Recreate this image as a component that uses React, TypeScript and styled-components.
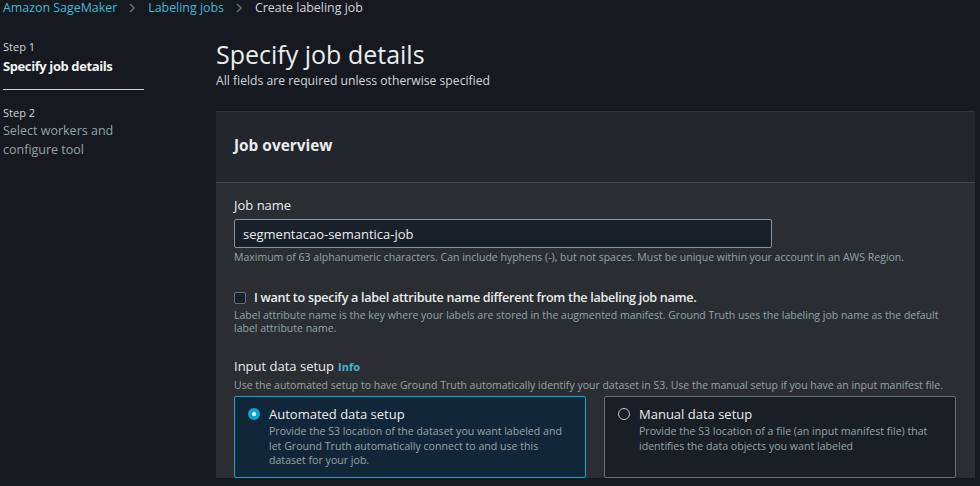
import React from "react";
import styled, { createGlobalStyle } from "styled-components";

const Global = createGlobalStyle`
  html, body { margin: 0; padding: 0; background: #16191f; }
  body { font-family: "Open Sans", "Noto Sans", sans-serif; color: #d1d5db; width: 980px; height: 486px; overflow: hidden; }
  * { box-sizing: border-box; }
`;

const Page = styled.div`
  width: 980px;
  height: 486px;
  overflow: hidden;
  background: #16191f;
`;

const Breadcrumbs = styled.nav`
  display: flex;
  align-items: center;
  gap: 10px;
  height: 16px;
  padding-left: 3px;
  font-size: 12.4px;
  line-height: 16px;
`;

const Crumb = styled.span<{ $link?: boolean }>`
  color: ${(p) => (p.$link ? "#44b9d6" : "#d1d5db")};
  white-space: nowrap;
`;

const Chevron = styled.svg`
  width: 11px;
  height: 12px;
  flex: none;
`;

const Layout = styled.div`
  display: grid;
  grid-template-columns: 216px 1fr;
  padding-top: 23px;
`;

const SideNav = styled.aside`
  padding-left: 3px;
  display: flex;
  flex-direction: column;
`;

const StepBlock = styled.div<{ $active?: boolean }>`
  width: 141px;
  padding-bottom: ${(p) => (p.$active ? "13px" : "0")};
  border-bottom: ${(p) => (p.$active ? "1px solid #d1d5db" : "none")};
  margin-bottom: ${(p) => (p.$active ? "15px" : "0")};
`;

const StepNum = styled.div`
  font-size: 11px;
  line-height: 16px;
  color: #d1d5db;
`;

const StepTitle = styled.div<{ $active?: boolean }>`
  font-size: ${(p) => (p.$active ? "13px" : "12.5px")};
  line-height: 19px;
  margin-top: ${(p) => (p.$active ? "2px" : "0")};
  font-weight: ${(p) => (p.$active ? 700 : 400)};
  letter-spacing: ${(p) => (p.$active ? "-0.4px" : "0")};
  color: ${(p) => (p.$active ? "#f2f3f3" : "#95a5a6")};
`;

const Main = styled.main`
  display: flex;
  flex-direction: column;
  width: 759px;
`;

const Title = styled.h1`
  margin: 0;
  font-size: 25px;
  font-weight: 400;
  line-height: 30px;
  color: #eaeded;
`;

const Subtitle = styled.p`
  margin: 4px 0 0;
  font-size: 12.2px;
  line-height: 16px;
  color: #d1d5db;
`;

const Container = styled.section`
  margin-top: 22px;
  background: #2a2e33;
  border-top: 1px solid #2f343a;
`;

const ContainerHeader = styled.header`
  background: #22262d;
  height: 71px;
  padding: 0 18px 3px;
  display: flex;
  align-items: center;
  border-bottom: 1px solid #414750;
`;

const HeaderTitle = styled.h2`
  margin: 0;
  font-size: 15.4px;
  font-weight: 700;
  color: #eaeded;
`;

const ContainerBody = styled.div`
  padding: 13px 18px 0;
  display: flex;
  flex-direction: column;
`;

const Field = styled.div<{ $gap?: number }>`
  display: flex;
  flex-direction: column;
  margin-bottom: ${(p) => p.$gap ?? 0}px;
`;

const Label = styled.label`
  font-size: 13px;
  line-height: 18px;
  color: #eaeded;
  display: flex;
  align-items: baseline;
  gap: 4px;
`;

const InfoLink = styled.span`
  font-size: 11px;
  font-weight: 700;
  color: #44b9d6;
`;

const Input = styled.div`
  margin-top: 5px;
  width: 538px;
  height: 29px;
  background: #1a2029;
  border: 1px solid #879596;
  border-radius: 2px;
  padding: 0 8px;
  display: flex;
  align-items: center;
  font-size: 13px;
  color: #eaeded;
`;

const Hint = styled.div`
  margin-top: 3px;
  font-size: 10.5px;
  line-height: 13px;
  color: #95a5a6;
`;

const CheckRow = styled.div`
  display: flex;
  align-items: center;
  gap: 8px;
`;

const CheckBox = styled.span`
  width: 12px;
  height: 12px;
  border: 1px solid #687078;
  border-radius: 2px;
  background: #1a2029;
  flex: none;
`;

const CheckLabel = styled.span`
  font-size: 12.6px;
  font-weight: 600;
  letter-spacing: -0.3px;
  color: #eaeded;
`;

const Cards = styled.div`
  margin-top: 4px;
  display: grid;
  grid-template-columns: 352px 352px;
  gap: 18px;
`;

const Card = styled.div<{ $selected?: boolean }>`
  height: 82px;
  border: 1px solid ${(p) => (p.$selected ? "#0aa5d0" : "#687078")};
  background: ${(p) => (p.$selected ? "#12263a" : "#1a1e25")};
  border-radius: 2px;
  padding: 8px 14px 0 13px;
  display: grid;
  grid-template-columns: 12px 1fr;
  column-gap: 9px;
  align-content: start;
`;

const Radio = styled.span<{ $checked?: boolean }>`
  width: 12px;
  height: 12px;
  border-radius: 50%;
  margin-top: 3px;
  box-sizing: border-box;
  ${(p) =>
    p.$checked
      ? "border: 4px solid #0aa5d0; background: #fff;"
      : "border: 1px solid #c6ccd2; background: transparent;"}
`;

const CardTitle = styled.div`
  font-size: 13px;
  line-height: 18px;
  color: #eaeded;
`;

const CardDesc = styled.div`
  grid-column: 2;
  margin-top: 1px;
  font-size: 10.6px;
  line-height: 14.5px;
  color: #95a5a6;
`;

const ChevronIcon = () => (
  <Chevron viewBox="0 0 11 12">
    <path d="M3 2 L7 6 L3 10" fill="none" stroke="#687078" strokeWidth="1.5" />
  </Chevron>
);

export default function App() {
  return (
    <Page>
      <Global />
      <Breadcrumbs>
        <Crumb $link>Amazon SageMaker</Crumb>
        <ChevronIcon />
        <Crumb $link>Labeling jobs</Crumb>
        <ChevronIcon />
        <Crumb>Create labeling job</Crumb>
      </Breadcrumbs>
      <Layout>
        <SideNav>
          <StepBlock $active>
            <StepNum>Step 1</StepNum>
            <StepTitle $active>Specify job details</StepTitle>
          </StepBlock>
          <StepBlock>
            <StepNum>Step 2</StepNum>
            <StepTitle>
              Select workers and
              <br />
              configure tool
            </StepTitle>
          </StepBlock>
        </SideNav>
        <Main>
          <Title>Specify job details</Title>
          <Subtitle>All fields are required unless otherwise specified</Subtitle>
          <Container>
            <ContainerHeader>
              <HeaderTitle>Job overview</HeaderTitle>
            </ContainerHeader>
            <ContainerBody>
              <Field $gap={25}>
                <Label>Job name</Label>
                <Input>segmentacao-semantica-job</Input>
                <Hint>
                  Maximum of 63 alphanumeric characters. Can include hyphens (-), but not spaces. Must be unique
                  within your account in an AWS Region.
                </Hint>
              </Field>
              <Field $gap={22}>
                <CheckRow>
                  <CheckBox />
                  <CheckLabel>I want to specify a label attribute name different from the labeling job name.</CheckLabel>
                </CheckRow>
                <Hint>
                  Label attribute name is the key where your labels are stored in the augmented manifest. Ground Truth
                  uses the labeling job name as the default label attribute name.
                </Hint>
              </Field>
              <Field>
                <Label>
                  Input data setup <InfoLink>Info</InfoLink>
                </Label>
                <Hint>
                  Use the automated setup to have Ground Truth automatically identify your dataset in S3. Use the
                  manual setup if you have an input manifest file.
                </Hint>
                <Cards>
                  <Card $selected>
                    <Radio $checked />
                    <CardTitle>Automated data setup</CardTitle>
                    <CardDesc>
                      Provide the S3 location of the dataset you want labeled and let Ground Truth automatically
                      connect to and use this dataset for your job.
                    </CardDesc>
                  </Card>
                  <Card>
                    <Radio />
                    <CardTitle>Manual data setup</CardTitle>
                    <CardDesc>
                      Provide the S3 location of a file (an input manifest file) that identifies the data objects you
                      want labeled
                    </CardDesc>
                  </Card>
                </Cards>
              </Field>
            </ContainerBody>
          </Container>
        </Main>
      </Layout>
    </Page>
  );
}
